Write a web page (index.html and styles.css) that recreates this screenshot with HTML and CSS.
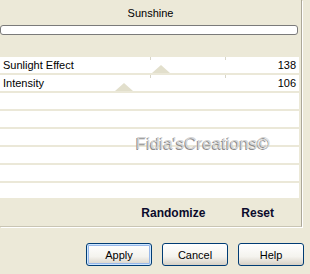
FILE: index.html
```html
<!DOCTYPE html>
<html lang="en">
<head>
    <meta charset="UTF-8">
    <title>Sunshine</title>
    <link rel="stylesheet" href="styles.css">
</head>
<body>
    <div class="panel">
        <div class="title">Sunshine</div>
        <div class="progress"></div>
        <div class="list">
            <div class="row">
                <span class="tick tick-a"></span>
                <span class="tick tick-b"></span>
                <span class="thumb" style="left: 152px"></span>
                <span class="label">Sunlight Effect</span>
                <span class="value">138</span>
            </div>
            <div class="row">
                <span class="tick tick-a"></span>
                <span class="tick tick-b"></span>
                <span class="thumb" style="left: 115px"></span>
                <span class="label">Intensity</span>
                <span class="value">106</span>
            </div>
            <div class="row"></div>
            <div class="row"></div>
            <div class="row"></div>
            <div class="row"></div>
            <div class="row"></div>
            <div class="list-end"></div>
            <div class="watermark">Fidia'sCreations©</div>
        </div>
        <div class="actions">
            <span>Randomize</span>
            <span>Reset</span>
        </div>
    </div>
    <div class="buttons">
        <button class="default">Apply</button>
        <button>Cancel</button>
        <button>Help</button>
    </div>
</body>
</html>
```

FILE: styles.css
```css
body {
    margin: 0;
    background-color: #ece9d8;
    font-family: "Liberation Sans", Arial, sans-serif;
    font-size: 11px;
    color: #000000;
}

.panel {
    width: 302px;
    height: 227px;
    border-right: 1px solid #aca899;
    border-bottom: 1px solid #c9c5b4;
    box-shadow: 1px 1px 0 #ffffff;
    box-sizing: border-box;
}

.title {
    padding-top: 6px;
    line-height: 14px;
    text-align: center;
}

.progress {
    margin-top: 5px;
    width: 298px;
    height: 10px;
    box-sizing: border-box;
    background: #ffffff;
    border: 1px solid #7a7a7a;
    border-radius: 3px;
}

.list {
    position: relative;
    margin-top: 22px;
    width: 299px;
    background: #ffffff;
}

.row {
    position: relative;
    display: flex;
    justify-content: space-between;
    align-items: center;
    height: 16px;
    padding: 0 3px 0 3px;
    border-bottom: 2px solid #ebe8d8;
    line-height: 16px;
}

.tick {
    position: absolute;
    top: 0;
    width: 1px;
    height: 3px;
    background: #d8d6c8;
}

.tick-a {
    left: 150px;
}

.tick-b {
    left: 225px;
}

.thumb {
    position: absolute;
    bottom: 0;
    width: 0;
    height: 0;
    border-left: 9px solid transparent;
    border-right: 9px solid transparent;
    border-bottom: 8px solid #e2dfcc;
}

.label,
.value {
    position: relative;
}

.list-end {
    height: 15px;
}

.watermark {
    position: absolute;
    left: 136px;
    top: 77px;
    font-size: 17px;
    line-height: 20px;
    color: #d4d4d4;
    text-shadow: -1px 1px 0 #8e8e8e;
}

.actions {
    display: flex;
    justify-content: flex-end;
    gap: 36px;
    padding: 8px 27px 0 0;
    font-size: 12px;
    font-weight: bold;
    line-height: 14px;
    color: #0b0b2b;
}

.buttons {
    display: flex;
    justify-content: flex-end;
    gap: 10px;
    margin-top: 16px;
    padding-right: 6px;
}

button {
    width: 66px;
    height: 23px;
    padding: 0;
    font-family: "Liberation Sans", Arial, sans-serif;
    font-size: 11px;
    color: #000000;
    background: linear-gradient(#ffffff, #f4f3ee 60%, #d6d0c5);
    border: 1px solid #003c74;
    border-radius: 3px;
}

button.default {
    box-shadow: inset 0 0 0 1px #cee7ff, inset 0 0 0 2px #98b8ea;
}
```
